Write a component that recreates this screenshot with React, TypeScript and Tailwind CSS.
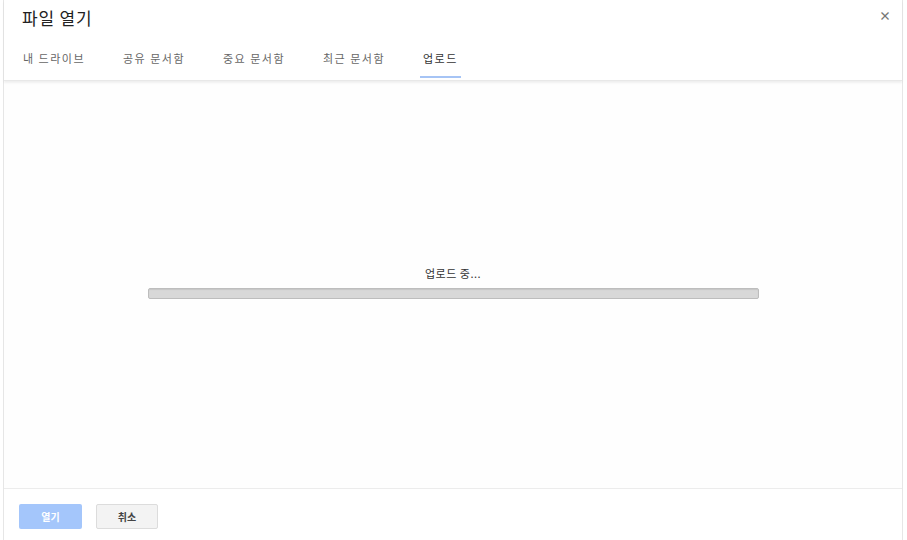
const tabs = ['내 드라이브', '공유 문서함', '중요 문서함', '최근 문서함', '업로드'];

export default function App() {
  const active = 4;

  return (
    <div
      className="w-[907px] h-[540px] bg-white overflow-hidden"
      style={{ fontFamily: '"Noto Sans CJK KR", "Noto Sans", sans-serif' }}
    >
      <div className="ml-[3px] w-[900px] h-[540px] border-x border-[#e6e6e6] flex flex-col bg-[#fefefe]">
        {/* 헤더 */}
        <div className="bg-white border-b border-[#e8e8e8] shadow-[0_2px_2px_rgba(0,0,0,0.06)] relative z-10">
          <div className="flex items-start justify-between h-[42px] pl-[18px] pr-[11px]">
            <h1 className="mt-[5px] text-[17px] leading-[26px] tracking-[0.8px] text-[#222]">파일 열기</h1>
            <button className="mt-[9px] text-[12px] leading-[14px] font-bold text-[#777]">×</button>
          </div>
          <div className="flex h-[38px] pl-[16px]">
            {tabs.map((t, i) => (
              <div key={t} className="w-[100px] flex items-start">
                <span
                  className={
                    'px-[3px] pt-[8px] pb-[10px] text-[11px] leading-[16px] tracking-[1.5px] border-b-2 ' +
                    (i === active ? 'text-[#333] border-[#a6c4f5]' : 'text-[#666] border-transparent')
                  }
                >
                  {t}
                </span>
              </div>
            ))}
          </div>
        </div>

        {/* 본문 */}
        <div className="flex-1 flex flex-col items-center justify-center pb-[4px]">
          <div className="text-[11px] leading-[14px] tracking-[0.5px] text-[#333]">업로드 중...</div>
          <div className="mt-[8px] w-[611px] h-[11px] rounded-[2px] border border-[#bdbdbd] bg-[#d8d8d8] shadow-[inset_0_1px_1px_rgba(0,0,0,0.08)]" />
        </div>

        {/* 푸터 */}
        <div className="h-[52px] border-t border-[#ececec] bg-white flex items-center gap-[14px] pl-[15px] pt-[4px]">
          <button className="w-[63px] h-[25px] rounded-[2px] bg-[#a4c6fb] text-white text-[10px] font-bold">열기</button>
          <button className="w-[62px] h-[25px] rounded-[2px] border border-[#dcdcdc] bg-[#f3f3f3] text-[#444] text-[10px] font-bold">
            취소
          </button>
        </div>
      </div>
    </div>
  );
}
